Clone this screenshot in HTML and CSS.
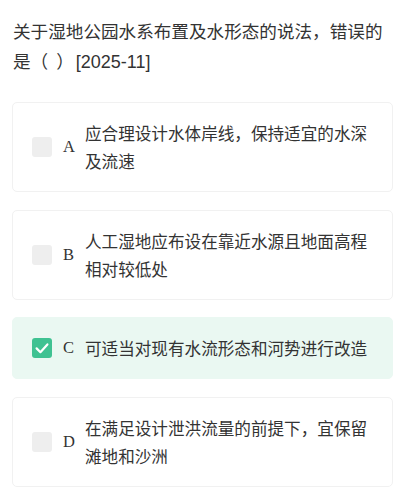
FILE: index.html
```html
<!DOCTYPE html>
<html lang="zh">
<head>
<meta charset="utf-8">
<link rel="stylesheet" href="styles.css">
</head>
<body>
<div class="page">
  <div class="question">关于湿地公园水系布置及水形态的说法，错误的是（<span class="gap"></span>）<span class="latin">[2025-11]</span></div>
  <div class="options">
    <div class="option">
      <span class="box"></span>
      <span class="letter">A</span>
      <span class="text">应合理设计水体岸线，保持适宜的水深及流速</span>
    </div>
    <div class="option">
      <span class="box"></span>
      <span class="letter">B</span>
      <span class="text">人工湿地应布设在靠近水源且地面高程相对较低处</span>
    </div>
    <div class="option selected">
      <span class="box checked">
        <svg viewBox="0 0 20 20" width="20" height="20"><path d="M4.6 10.4 L8.4 14.2 L15.4 6.4" fill="none" stroke="#fff" stroke-width="2.2" stroke-linecap="round" stroke-linejoin="round"/></svg>
      </span>
      <span class="letter">C</span>
      <span class="text">可适当对现有水流形态和河势进行改造</span>
    </div>
    <div class="option">
      <span class="box"></span>
      <span class="letter">D</span>
      <span class="text">在满足设计泄洪流量的前提下，宜保留滩地和沙洲</span>
    </div>
  </div>
</div>
</body>
</html>
```

FILE: styles.css
```css
html, body {
  margin: 0;
  padding: 0;
  background: #ffffff;
}
.page {
  padding: 16px 12px 0 13px;
  font-family: "Noto Sans CJK SC", "Noto Sans", sans-serif;
  color: #333333;
}
.question {
  font-size: 17.6px;
  line-height: 30px;
  color: #333333;
}
.gap {
  display: inline-block;
  width: 8px;
}
.latin {
  font-family: "Liberation Sans", Arial, sans-serif;
  font-size: 18px;
  margin-left: 2px;
}
.options {
  margin-top: 25px;
  margin-left: -1px;
  display: flex;
  flex-direction: column;
  gap: 17.5px;
}
.option {
  display: flex;
  align-items: center;
  border: 1px solid #f1f1f1;
  border-radius: 5px;
  padding: 16px 19px 16px 19px;
  background: #ffffff;
}
.option.selected {
  background: #eaf8f2;
  border-color: #eaf8f2;
}
.box {
  flex: none;
  width: 20px;
  height: 20px;
  border-radius: 3px;
  background: #eeeeee;
  display: flex;
}
.box.checked {
  background: #3fc292;
}
.letter {
  flex: none;
  width: 22px;
  margin-left: 11px;
  font-family: "Liberation Serif", "Times New Roman", serif;
  font-size: 16.5px;
  color: #333333;
}
.text {
  flex: 1;
  font-size: 16.6px;
  line-height: 28px;
  color: #333333;
}
```
